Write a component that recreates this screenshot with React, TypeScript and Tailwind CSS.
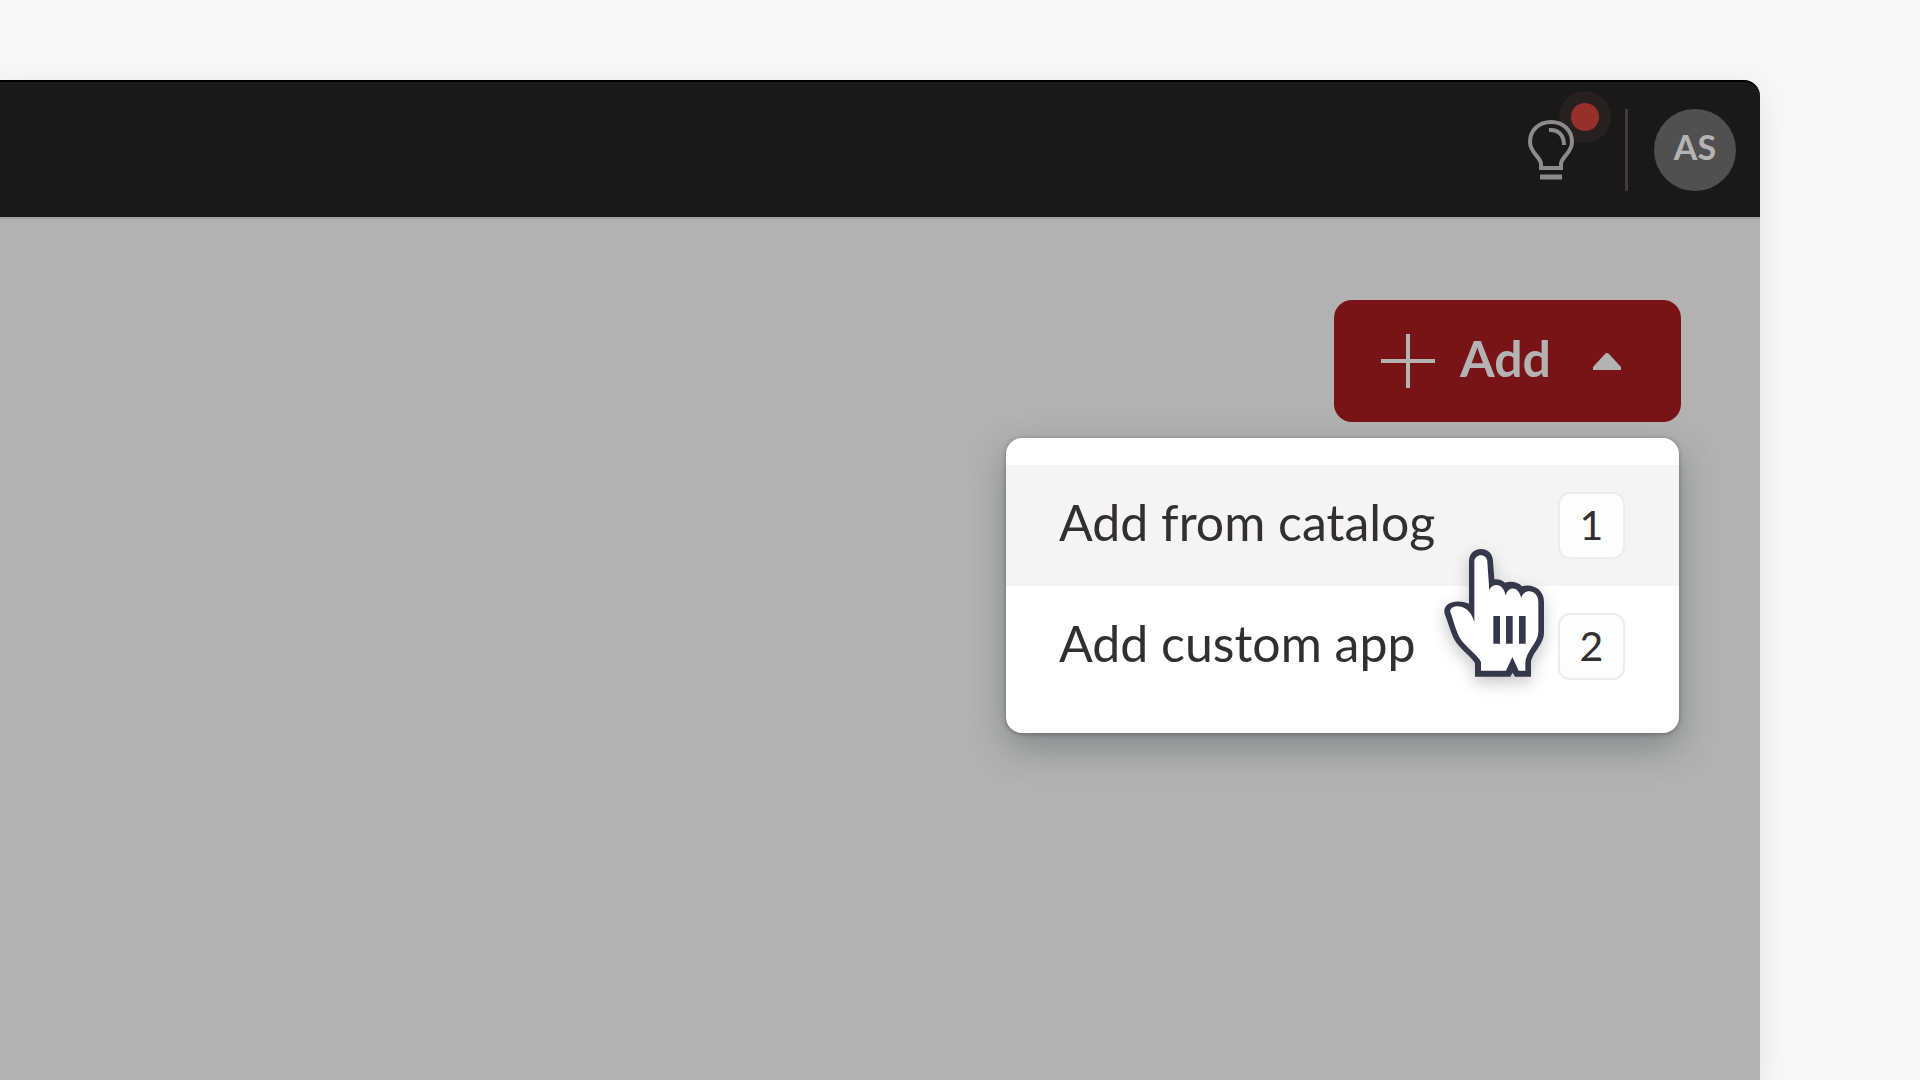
import React from "react";

function Bulb() {
  return (
    <svg viewBox="0 0 48 62" className="relative h-[62px] w-12" fill="none" stroke="#8b8b8b" aria-hidden="true">
      <path d="M14 49V45C14 38 3 34 3 23C3 11 12 3 24 3S45 11 45 23C45 34 34 38 34 45V49Z" strokeWidth="4" />
      <path d="M22 11C31 10 37 16 37 26" strokeWidth="4" />
      <path d="M13 58H35" strokeWidth="5" />
    </svg>
  );
}

function HandCursor() {
  return (
    <svg
      viewBox="120 81 324 402"
      className="pointer-events-none absolute top-[109px] right-[131px] h-[134px] w-[108px] overflow-visible drop-shadow-[0_6px_8px_rgba(0,0,0,0.22)]"
      aria-hidden="true"
    >
      <path
        fill="#35384b"
        d="M207 124C207 75 279 75 279 124L283 178C295 177 307 180 315 188C335 182 355 187 366 199C400 190 432 210 432 245V338C432 375 393 400 393 430V470H345L338 458L331 470H225V430C215 410 181 390 162 357C150 332 143 303 134 282C126 250 165 235 207 251Z"
      />
      <path
        fill="#ffffff"
        d="M223 126C223 99 262 99 262 126L268 212C275 189 309 186 317 227C323 198 356 196 364 235C370 203 415 208 415 246V336C415 368 376 395 376 430V452H356L337 411L318 452H243V426C232 403 199 385 180 355C166 328 159 297 151 276C146 253 208 245 223 307Z"
      />
      <path fill="#35384b" d="M280 288H300V371H280ZM318 288H338V371H318ZM357 288H377V371H357Z" />
    </svg>
  );
}

function MenuItem({ label, shortcut, active = false }: { label: string; shortcut: string; active?: boolean }) {
  return (
    <li role="none">
      <button
        type="button"
        role="menuitem"
        className={
          "flex h-[121px] w-full items-center justify-between pr-[54px] pl-[53px] text-left text-[#332f31] " +
          (active ? "bg-[#f4f4f4]" : "bg-white")
        }
      >
        <span className="pb-2 text-[50px] leading-[60px]">{label}</span>
        <kbd className="flex size-[67px] items-center justify-center rounded-xl border-2 border-[#ececec] bg-[#fdfdfd] pb-0.5 font-[Lato,sans-serif] text-[41px] leading-none">
          {shortcut}
        </kbd>
      </button>
    </li>
  );
}

export default function App() {
  return (
    <div className="flex h-screen flex-col overflow-hidden bg-[#f8f8f8] pt-20 pr-40 font-[Lato,sans-serif]">
      <div className="flex min-h-0 flex-1 flex-col rounded-tr-2xl bg-[#b2b2b2] shadow-[0_8px_36px_rgba(0,0,0,0.09)]">
        <header className="flex h-[137px] shrink-0 items-center justify-end rounded-tr-2xl border-t-2 border-black bg-[#191919] pr-6">
          <button type="button" aria-label="What's new" className="relative mr-[50px]">
            <span className="absolute -top-7 -right-9 flex size-[52px] items-center justify-center rounded-full bg-[#262020]">
              <span className="size-7 rounded-full bg-[#96302b]" />
            </span>
            <Bulb />
          </button>
          <div className="mr-[26px] h-[82px] w-[3px] bg-[#443a3b]" />
          <button
            type="button"
            className="flex size-[82px] items-center justify-center rounded-full bg-[#505050] pb-1.5 text-[34px] leading-none font-bold text-[#b4b4b4]"
          >
            AS
          </button>
        </header>
        <main className="flex justify-end border-t-2 border-[#a3a3a3] pt-[81px] pr-[79px]">
          <div className="relative">
            <button
              type="button"
              aria-haspopup="menu"
              aria-expanded="true"
              className="flex h-[122px] items-center rounded-[18px] bg-[#781418] pr-[60px] pl-[46px] text-[#b3b3b3]"
            >
              <svg viewBox="0 0 56 56" className="size-14" stroke="currentColor" strokeWidth="4" aria-hidden="true">
                <path d="M28 1V55M1 28H55" />
              </svg>
              <span className="ml-6 pb-1.5 text-[50px] leading-[60px] font-bold">Add</span>
              <svg viewBox="0 0 28 17" className="ml-[42px] h-[17px] w-7" fill="currentColor" aria-hidden="true">
                <path d="M0 17V14L12 1Q14 -1 16 1L28 14V17Z" />
              </svg>
            </button>
            <div className="absolute top-[138px] right-0.5 w-[673px] rounded-2xl bg-white pt-[27px] pb-[26px] shadow-[0_1px_5px_rgba(0,0,0,0.3),0_14px_36px_rgba(60,70,72,0.4)]">
              <ul role="menu" aria-label="Add">
                <MenuItem label="Add from catalog" shortcut="1" active />
                <MenuItem label="Add custom app" shortcut="2" />
              </ul>
              <HandCursor />
            </div>
          </div>
        </main>
      </div>
    </div>
  );
}
